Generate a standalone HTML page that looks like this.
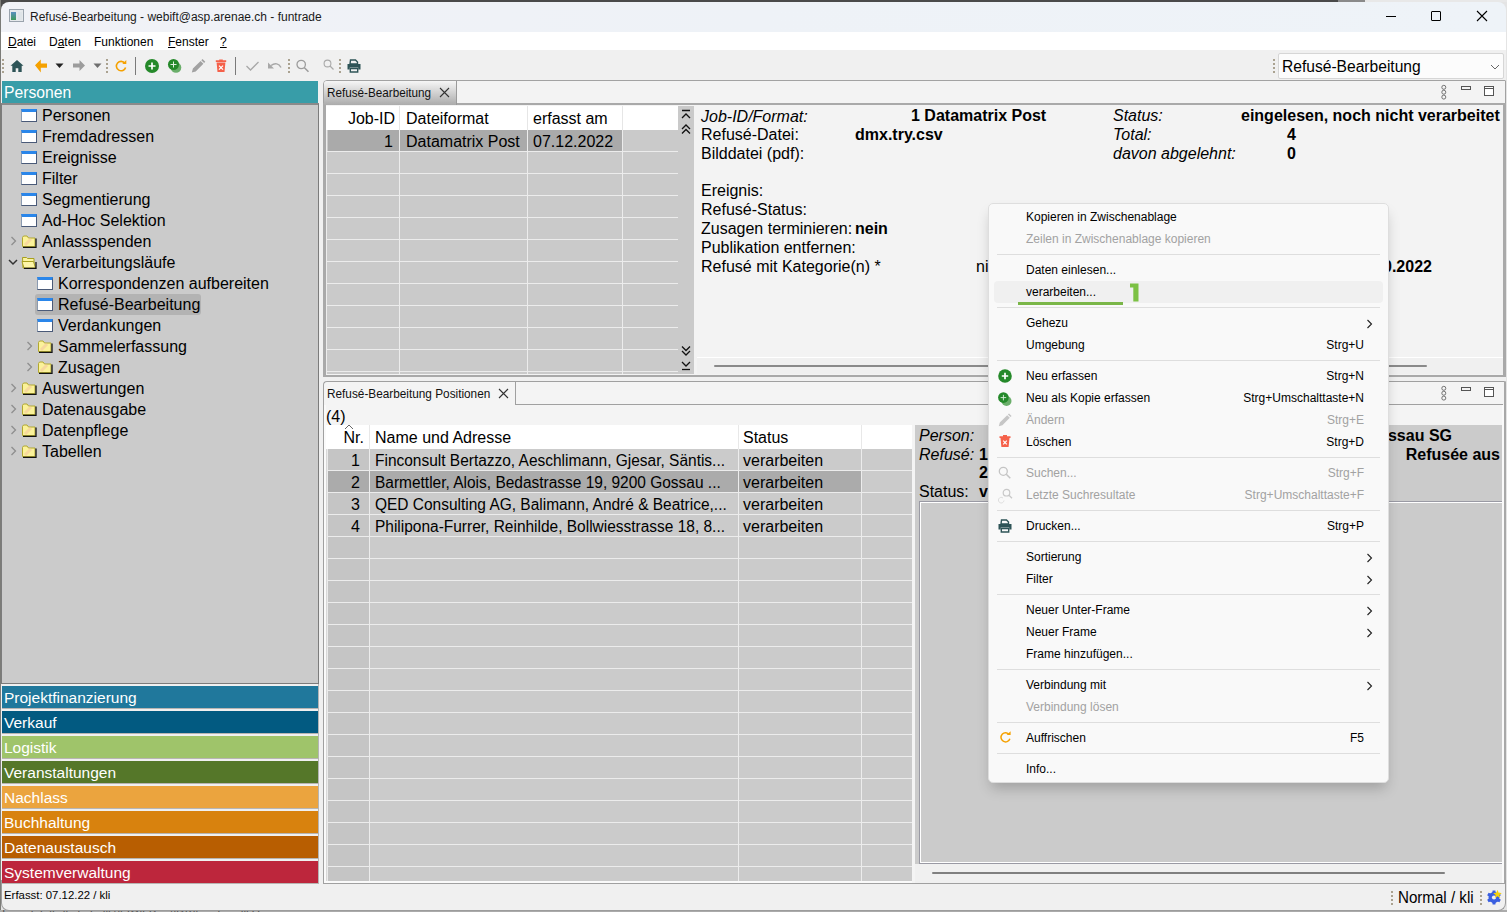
<!DOCTYPE html>
<html><head><meta charset="utf-8">
<style>
*{box-sizing:border-box;margin:0;padding:0}
html,body{width:1507px;height:912px;overflow:hidden;background:#e4e4e4;font-family:"Liberation Sans",sans-serif;color:#000}
.a{position:absolute}
#win{left:0;top:0;width:1507px;height:912px;clip-path:inset(2px 1px 2px 1px round 8px)}
.t12{font-size:12px;white-space:nowrap;line-height:14px}
.t16{font-size:16px;white-space:nowrap;line-height:18px}
.mi{position:absolute;left:1026px;font-size:12px;line-height:14px;white-space:nowrap}
.sc{position:absolute;right:144px;font-size:12px;line-height:14px;white-space:nowrap;text-align:right}
.dis{color:#a0a0a0}
.sep{position:absolute;left:997px;width:383px;height:1px;background:#e0e0e0}
</style></head><body>
<!-- screen strip -->
<div class="a" style="left:0;top:0;width:1507px;height:2px;background:#e8e8e8"></div>
<div class="a" style="left:0;top:0;width:1338px;height:2px;background:#4a4a4a"></div><div class="a" style="left:0;top:0;width:10px;height:10px;background:#4a4a4a"></div>
<div class="a" style="left:1338px;top:0;width:27px;height:2px;background:#8a8a8a"></div>
<div class="a" style="left:0;top:0;width:1px;height:912px;background:#7c7c78"></div>

<div class="a" style="left:0;top:910px;width:1507px;height:2px;background:#ababab"></div><div class="a" style="left:0;top:910px;width:300px;height:2px;overflow:hidden"><div class="a t12" style="left:2px;top:-2px;color:#555">Isvindelnlhdluilmlsdlk\lhIOlLBeutlDKllacuhnsdlliHcnmmnnmnnmnnmvhdubd/lmdlkhndImkl</div></div>
<div class="a" id="win">
<!-- title bar -->
<div class="a" style="left:0;top:0;width:1507px;height:32px;background:linear-gradient(90deg,#f1f2f7,#eef2f7 50%,#eef3f8)"></div>
<!-- menu bar -->
<div class="a" style="left:0;top:32px;width:1507px;height:18px;background:#fff"></div>
<!-- toolbar -->
<div class="a" style="left:0;top:50px;width:1507px;height:31px;background:#f0f0f0"></div>

<!-- title icon -->
<div class="a" style="left:9px;top:9px;width:15px;height:13px;border:1px solid #9aa3ad;background:#e6e9ec"></div>
<div class="a" style="left:11px;top:12px;width:5px;height:8px;background:linear-gradient(#5a8fc0,#3f9a5a)"></div>
<div class="a" style="left:18px;top:12px;width:4px;height:8px;background:#dfe4e8"></div>
<div class="a t12" style="left:30px;top:10px;color:#1a1a1a">Refusé-Bearbeitung - webift@asp.arenae.ch - funtrade</div>
<!-- window controls -->
<div class="a" style="left:1386px;top:16px;width:10px;height:1px;background:#000"></div>
<div class="a" style="left:1431px;top:11px;width:10px;height:10px;border:1px solid #000;border-radius:1px"></div>
<svg class="a" style="left:1476px;top:10px" width="12" height="12"><path d="M1 1L11 11M11 1L1 11" stroke="#000" stroke-width="1.1"/></svg>
<!-- menu -->
<div class="a t12" style="left:8px;top:35px"><u>D</u>atei</div>
<div class="a t12" style="left:49px;top:35px">D<u>a</u>ten</div>
<div class="a t12" style="left:94px;top:35px">Funktionen</div>
<div class="a t12" style="left:168px;top:35px"><u>F</u>enster</div>
<div class="a t12" style="left:220px;top:35px"><u>?</u></div>
<div class="a" style="left:2px;top:59px;width:1.6px;height:1.6px;background:#aaa290"></div><div class="a" style="left:2px;top:63px;width:1.6px;height:1.6px;background:#aaa290"></div><div class="a" style="left:2px;top:67px;width:1.6px;height:1.6px;background:#aaa290"></div><div class="a" style="left:2px;top:71px;width:1.6px;height:1.6px;background:#aaa290"></div>
<svg class="a" style="left:10px;top:59px" width="15" height="14"><path d="M7 1L0.5 6.8h1.8V13h3.4V9.2h2.6V13h3.4V6.8h1.8z" fill="#2e5457"/></svg>
<svg class="a" style="left:34px;top:59px" width="14" height="14"><path d="M1 6.3L6.8 0.6v3.9H13v4.3H6.8v4.6z" fill="#f5a100"/></svg>
<svg class="a" style="left:55px;top:63px" width="9" height="6"><path d="M0.5 0.5h8L4.5 5z" fill="#222"/></svg>
<svg class="a" style="left:72px;top:59px" width="14" height="14"><path d="M13 6.5L7.5 1v3.6H1v4h6.5V12z" fill="#9c9c9c"/></svg>
<svg class="a" style="left:93px;top:63px" width="9" height="6"><path d="M0.5 0.5h8L4.5 5z" fill="#6e6e6e"/></svg>
<div class="a" style="left:106px;top:59px;width:1.6px;height:1.6px;background:#aaa290"></div><div class="a" style="left:106px;top:63px;width:1.6px;height:1.6px;background:#aaa290"></div><div class="a" style="left:106px;top:67px;width:1.6px;height:1.6px;background:#aaa290"></div><div class="a" style="left:106px;top:71px;width:1.6px;height:1.6px;background:#aaa290"></div>
<svg class="a" style="left:114px;top:59px" width="15" height="15"><path d="M10.9 4.3A4.7 4.7 0 1 0 11.6 8.4" fill="none" stroke="#f5a100" stroke-width="1.6"/><path d="M8.3 4.9h4V1z" fill="#f5a100"/></svg>
<div class="a" style="left:135px;top:57px;width:1px;height:18px;background:#7a7a7a"></div>
<svg class="a" style="left:144px;top:58px" width="16" height="16"><circle cx="8" cy="8" r="7" fill="#25892a"/><path d="M8 4.5v7M4.5 8h7" stroke="#fff" stroke-width="1.7"/></svg>
<svg class="a" style="left:166px;top:57px" width="16" height="16"><circle cx="10" cy="10.5" r="5.3" fill="#6aae6a"/><circle cx="7.5" cy="7.5" r="5.5" fill="#25892a"/><path d="M7.5 4.5v6M4.5 7.5h6" stroke="#dff0df" stroke-width="1"/></svg>
<svg class="a" style="left:191px;top:59px" width="15" height="15"><path d="M0.8 13.4L1.9 9.6L9.6 1.9L12.4 4.7L4.7 12.4Z M10.3 1.2L11.5 0L14.3 2.8L13.1 4Z" fill="#a2a2a2"/></svg>
<svg class="a" style="left:214px;top:58px" width="14" height="16"><path d="M1.8 2.2h10.4v1.9H1.8z M5.2 1.4h3.6v1H5.2z M2.6 4.6h8.8l-0.9 9.4H3.5z" fill="#f5614a"/><path d="M5 7.6l4 4M9 7.6l-4 4" stroke="#fff" stroke-width="1.3"/></svg>
<div class="a" style="left:235px;top:57px;width:1px;height:18px;background:#7a7a7a"></div>
<svg class="a" style="left:245px;top:60px" width="15" height="12"><path d="M1.5 6l4 4 8-8" fill="none" stroke="#a8a8a8" stroke-width="1.3"/></svg>
<svg class="a" style="left:267px;top:61px" width="16" height="10"><path d="M4 4.5c4-3 8-2 10 2" fill="none" stroke="#a8a8a8" stroke-width="1.5"/><path d="M1 1.5v6h6z" fill="#a8a8a8"/></svg>
<div class="a" style="left:288px;top:59px;width:1.6px;height:1.6px;background:#aaa290"></div><div class="a" style="left:288px;top:63px;width:1.6px;height:1.6px;background:#aaa290"></div><div class="a" style="left:288px;top:67px;width:1.6px;height:1.6px;background:#aaa290"></div><div class="a" style="left:288px;top:71px;width:1.6px;height:1.6px;background:#aaa290"></div>
<svg class="a" style="left:296px;top:59px" width="14" height="14"><circle cx="5.2" cy="5.5" r="4.2" fill="none" stroke="#9c9c9c" stroke-width="1.3"/><path d="M8.2 8.5l4.3 4.3" stroke="#9c9c9c" stroke-width="1.5"/></svg>
<svg class="a" style="left:323px;top:59px" width="12" height="12"><circle cx="4.5" cy="4.5" r="3.4" fill="none" stroke="#aaa" stroke-width="1.1"/><path d="M7 7l3.5 3.5" stroke="#aaa" stroke-width="1.2"/></svg>
<div class="a" style="left:339px;top:59px;width:1.6px;height:1.6px;background:#aaa290"></div><div class="a" style="left:339px;top:63px;width:1.6px;height:1.6px;background:#aaa290"></div><div class="a" style="left:339px;top:67px;width:1.6px;height:1.6px;background:#aaa290"></div><div class="a" style="left:339px;top:71px;width:1.6px;height:1.6px;background:#aaa290"></div>
<svg class="a" style="left:347px;top:59px" width="14" height="14"><path d="M3.5 1h5l2 2v2h-7.5z" fill="none" stroke="#2e5457" stroke-width="1.4"/><path d="M0.5 5h13v5.5h-2.2V8.5H2.7v2H0.5z" fill="#2e5457"/><path d="M3.3 9.5h7.4v3.5H3.3z" fill="none" stroke="#2e5457" stroke-width="1.4"/></svg>
<div class="a" style="left:1273px;top:59px;width:1.6px;height:1.6px;background:#aaa290"></div><div class="a" style="left:1273px;top:63px;width:1.6px;height:1.6px;background:#aaa290"></div><div class="a" style="left:1273px;top:67px;width:1.6px;height:1.6px;background:#aaa290"></div><div class="a" style="left:1273px;top:71px;width:1.6px;height:1.6px;background:#aaa290"></div>
<div class="a" style="left:1278px;top:53px;width:226px;height:26px;background:#fcfcfc;border:1px solid #d6d6d6;border-radius:2px"></div>
<div class="a t16" style="left:1282px;top:58px;font-size:15.6px">Refusé-Bearbeitung</div>
<svg class="a" style="left:1490px;top:64px" width="10" height="6"><path d="M1 1l4 4 4-4" fill="none" stroke="#666" stroke-width="1"/></svg>

<div class="a" style="left:1px;top:81px;width:318px;height:804px;background:#f0f0f0"></div>
<div class="a" style="left:2px;top:81px;width:316px;height:22px;background:#389da8"></div>
<div class="a t16" style="left:4px;top:84px;color:#fff;font-size:15.7px">Personen</div>
<div class="a" style="left:1px;top:103px;width:318px;height:581px;background:#cbcbcb;border:1px solid #7c7c7c;border-top:2px solid #8a8a8a"></div>
<div class="a" style="left:21px;top:109px;width:16px;height:13px;background:#fff;border:1px solid #4a5a78;border-left-color:#8a9ab0;border-top:3px solid #2a86ea"></div>
<div class="a" style="left:42px;top:107px;font-size:16px;line-height:18px;white-space:nowrap">Personen</div>
<div class="a" style="left:21px;top:130px;width:16px;height:13px;background:#fff;border:1px solid #4a5a78;border-left-color:#8a9ab0;border-top:3px solid #2a86ea"></div>
<div class="a" style="left:42px;top:128px;font-size:16px;line-height:18px;white-space:nowrap">Fremdadressen</div>
<div class="a" style="left:21px;top:151px;width:16px;height:13px;background:#fff;border:1px solid #4a5a78;border-left-color:#8a9ab0;border-top:3px solid #2a86ea"></div>
<div class="a" style="left:42px;top:149px;font-size:16px;line-height:18px;white-space:nowrap">Ereignisse</div>
<div class="a" style="left:21px;top:172px;width:16px;height:13px;background:#fff;border:1px solid #4a5a78;border-left-color:#8a9ab0;border-top:3px solid #2a86ea"></div>
<div class="a" style="left:42px;top:170px;font-size:16px;line-height:18px;white-space:nowrap">Filter</div>
<div class="a" style="left:21px;top:193px;width:16px;height:13px;background:#fff;border:1px solid #4a5a78;border-left-color:#8a9ab0;border-top:3px solid #2a86ea"></div>
<div class="a" style="left:42px;top:191px;font-size:16px;line-height:18px;white-space:nowrap">Segmentierung</div>
<div class="a" style="left:21px;top:214px;width:16px;height:13px;background:#fff;border:1px solid #4a5a78;border-left-color:#8a9ab0;border-top:3px solid #2a86ea"></div>
<div class="a" style="left:42px;top:212px;font-size:16px;line-height:18px;white-space:nowrap">Ad-Hoc Selektion</div>
<svg class="a" style="left:21px;top:234px" width="16" height="14"><path d="M1.5 3.5v9h12.5v-8.5h-6.5l-1.5-2h-3.5z" fill="#fbf29a" stroke="#b2a830" stroke-width="1"/><path d="M4 11l6-6" stroke="#f6c8a0" stroke-width="3" opacity="0.6"/><path d="M2 13.5h13V4.5" fill="none" stroke="#111" stroke-width="1.3"/></svg>
<svg class="a" style="left:10px;top:236px" width="7" height="10"><path d="M1.5 1l4 4-4 4" fill="none" stroke="#8e8e8e" stroke-width="1.3"/></svg>
<div class="a" style="left:42px;top:233px;font-size:16px;line-height:18px;white-space:nowrap">Anlassspenden</div>
<svg class="a" style="left:21px;top:255px" width="16" height="14"><path d="M1.5 2.5h4l1 1h6.5v9.5H2z" fill="#fbf3a0" stroke="#a8a020" stroke-width="1"/><path d="M1 6.5h11.5l2 6.5H3z" fill="#fdf5a8" stroke="#a8a020" stroke-width="1"/><path d="M3 13.5h12V7" fill="none" stroke="#111" stroke-width="1.3"/></svg>
<svg class="a" style="left:8px;top:259px" width="10" height="7"><path d="M1 1l4 4 4-4" fill="none" stroke="#333" stroke-width="1.5"/></svg>
<div class="a" style="left:42px;top:254px;font-size:16px;line-height:18px;white-space:nowrap">Verarbeitungsläufe</div>
<div class="a" style="left:37px;top:277px;width:16px;height:13px;background:#fff;border:1px solid #4a5a78;border-left-color:#8a9ab0;border-top:3px solid #2a86ea"></div>
<div class="a" style="left:58px;top:275px;font-size:16px;line-height:18px;white-space:nowrap">Korrespondenzen aufbereiten</div>
<div class="a" style="left:35px;top:283px;width:166px;height:21px;background:#b3b3b3;border-radius:3px;top:294px"></div>
<div class="a" style="left:37px;top:298px;width:16px;height:13px;background:#fff;border:1px solid #4a5a78;border-left-color:#8a9ab0;border-top:3px solid #2a86ea"></div>
<div class="a" style="left:58px;top:296px;font-size:16px;line-height:18px;white-space:nowrap">Refusé-Bearbeitung</div>
<div class="a" style="left:37px;top:319px;width:16px;height:13px;background:#fff;border:1px solid #4a5a78;border-left-color:#8a9ab0;border-top:3px solid #2a86ea"></div>
<div class="a" style="left:58px;top:317px;font-size:16px;line-height:18px;white-space:nowrap">Verdankungen</div>
<svg class="a" style="left:37px;top:339px" width="16" height="14"><path d="M1.5 3.5v9h12.5v-8.5h-6.5l-1.5-2h-3.5z" fill="#fbf29a" stroke="#b2a830" stroke-width="1"/><path d="M4 11l6-6" stroke="#f6c8a0" stroke-width="3" opacity="0.6"/><path d="M2 13.5h13V4.5" fill="none" stroke="#111" stroke-width="1.3"/></svg>
<svg class="a" style="left:26px;top:341px" width="7" height="10"><path d="M1.5 1l4 4-4 4" fill="none" stroke="#8e8e8e" stroke-width="1.3"/></svg>
<div class="a" style="left:58px;top:338px;font-size:16px;line-height:18px;white-space:nowrap">Sammelerfassung</div>
<svg class="a" style="left:37px;top:360px" width="16" height="14"><path d="M1.5 3.5v9h12.5v-8.5h-6.5l-1.5-2h-3.5z" fill="#fbf29a" stroke="#b2a830" stroke-width="1"/><path d="M4 11l6-6" stroke="#f6c8a0" stroke-width="3" opacity="0.6"/><path d="M2 13.5h13V4.5" fill="none" stroke="#111" stroke-width="1.3"/></svg>
<svg class="a" style="left:26px;top:362px" width="7" height="10"><path d="M1.5 1l4 4-4 4" fill="none" stroke="#8e8e8e" stroke-width="1.3"/></svg>
<div class="a" style="left:58px;top:359px;font-size:16px;line-height:18px;white-space:nowrap">Zusagen</div>
<svg class="a" style="left:21px;top:381px" width="16" height="14"><path d="M1.5 3.5v9h12.5v-8.5h-6.5l-1.5-2h-3.5z" fill="#fbf29a" stroke="#b2a830" stroke-width="1"/><path d="M4 11l6-6" stroke="#f6c8a0" stroke-width="3" opacity="0.6"/><path d="M2 13.5h13V4.5" fill="none" stroke="#111" stroke-width="1.3"/></svg>
<svg class="a" style="left:10px;top:383px" width="7" height="10"><path d="M1.5 1l4 4-4 4" fill="none" stroke="#8e8e8e" stroke-width="1.3"/></svg>
<div class="a" style="left:42px;top:380px;font-size:16px;line-height:18px;white-space:nowrap">Auswertungen</div>
<svg class="a" style="left:21px;top:402px" width="16" height="14"><path d="M1.5 3.5v9h12.5v-8.5h-6.5l-1.5-2h-3.5z" fill="#fbf29a" stroke="#b2a830" stroke-width="1"/><path d="M4 11l6-6" stroke="#f6c8a0" stroke-width="3" opacity="0.6"/><path d="M2 13.5h13V4.5" fill="none" stroke="#111" stroke-width="1.3"/></svg>
<svg class="a" style="left:10px;top:404px" width="7" height="10"><path d="M1.5 1l4 4-4 4" fill="none" stroke="#8e8e8e" stroke-width="1.3"/></svg>
<div class="a" style="left:42px;top:401px;font-size:16px;line-height:18px;white-space:nowrap">Datenausgabe</div>
<svg class="a" style="left:21px;top:423px" width="16" height="14"><path d="M1.5 3.5v9h12.5v-8.5h-6.5l-1.5-2h-3.5z" fill="#fbf29a" stroke="#b2a830" stroke-width="1"/><path d="M4 11l6-6" stroke="#f6c8a0" stroke-width="3" opacity="0.6"/><path d="M2 13.5h13V4.5" fill="none" stroke="#111" stroke-width="1.3"/></svg>
<svg class="a" style="left:10px;top:425px" width="7" height="10"><path d="M1.5 1l4 4-4 4" fill="none" stroke="#8e8e8e" stroke-width="1.3"/></svg>
<div class="a" style="left:42px;top:422px;font-size:16px;line-height:18px;white-space:nowrap">Datenpflege</div>
<svg class="a" style="left:21px;top:444px" width="16" height="14"><path d="M1.5 3.5v9h12.5v-8.5h-6.5l-1.5-2h-3.5z" fill="#fbf29a" stroke="#b2a830" stroke-width="1"/><path d="M4 11l6-6" stroke="#f6c8a0" stroke-width="3" opacity="0.6"/><path d="M2 13.5h13V4.5" fill="none" stroke="#111" stroke-width="1.3"/></svg>
<svg class="a" style="left:10px;top:446px" width="7" height="10"><path d="M1.5 1l4 4-4 4" fill="none" stroke="#8e8e8e" stroke-width="1.3"/></svg>
<div class="a" style="left:42px;top:443px;font-size:16px;line-height:18px;white-space:nowrap">Tabellen</div>
<div class="a" style="left:2px;top:686px;width:316px;height:22px;background:#20789c;"></div><div class="a" style="left:2px;top:708px;width:317px;height:1px;background:#b8b5b2"></div>
<div class="a t16" style="left:4px;top:689px;color:#fff;font-size:15.5px">Projektfinanzierung</div>
<div class="a" style="left:2px;top:711px;width:316px;height:22px;background:#025a81;"></div><div class="a" style="left:2px;top:733px;width:317px;height:1px;background:#b8b5b2"></div>
<div class="a t16" style="left:4px;top:714px;color:#fff;font-size:15.5px">Verkauf</div>
<div class="a" style="left:2px;top:736px;width:316px;height:22px;background:#9fc46a;"></div><div class="a" style="left:2px;top:758px;width:317px;height:1px;background:#b8b5b2"></div>
<div class="a t16" style="left:4px;top:739px;color:#fff;font-size:15.5px">Logistik</div>
<div class="a" style="left:2px;top:761px;width:316px;height:22px;background:#557729;"></div><div class="a" style="left:2px;top:783px;width:317px;height:1px;background:#b8b5b2"></div>
<div class="a t16" style="left:4px;top:764px;color:#fff;font-size:15.5px">Veranstaltungen</div>
<div class="a" style="left:2px;top:786px;width:316px;height:22px;background:#eba43e;"></div><div class="a" style="left:2px;top:808px;width:317px;height:1px;background:#b8b5b2"></div>
<div class="a t16" style="left:4px;top:789px;color:#fff;font-size:15.5px">Nachlass</div>
<div class="a" style="left:2px;top:811px;width:316px;height:22px;background:#d8820e;"></div><div class="a" style="left:2px;top:833px;width:317px;height:1px;background:#b8b5b2"></div>
<div class="a t16" style="left:4px;top:814px;color:#fff;font-size:15.5px">Buchhaltung</div>
<div class="a" style="left:2px;top:836px;width:316px;height:22px;background:#b85e01;"></div><div class="a" style="left:2px;top:858px;width:317px;height:1px;background:#b8b5b2"></div>
<div class="a t16" style="left:4px;top:839px;color:#fff;font-size:15.5px">Datenaustausch</div>
<div class="a" style="left:2px;top:861px;width:316px;height:22px;background:#bd263c;"></div><div class="a" style="left:2px;top:883px;width:317px;height:1px;background:#b8b5b2"></div>
<div class="a t16" style="left:4px;top:864px;color:#fff;font-size:15.5px">Systemverwaltung</div>
<div class="a" style="left:318px;top:684px;width:1px;height:200px;background:#b4b4b4"></div>
<div class="a" style="left:319px;top:81px;width:1188px;height:804px;background:#f0f0f0"></div>
<div class="a" style="left:323px;top:80px;width:1183px;height:297px;background:#f3f3f3;border:1px solid #a2a2a2;border-radius:4px 1px 0 0"></div>
<div class="a" style="left:323px;top:103px;width:1183px;height:274px;border:2px solid #a9a9a9;border-left-width:3px;border-right-width:3px"></div>
<div class="a" style="left:324px;top:81px;width:133px;height:24px;background:linear-gradient(#f6f6f6,#ababab);border-right:1px solid #9a9a9a;border-radius:3px 0 0 0"></div>
<div class="a t12" style="left:327px;top:86px;color:#111;font-size:12.2px;transform:scaleX(0.96);transform-origin:0 0">Refusé-Bearbeitung</div>
<svg class="a" style="left:439px;top:87px" width="11" height="11"><path d="M1 1l9 9M10 1l-9 9" stroke="#333" stroke-width="1.1"/></svg>
<svg class="a" style="left:1440px;top:84px" width="8" height="16"><circle cx="3.8" cy="3.3" r="2" fill="none" stroke="#555" stroke-width="0.8"/><circle cx="3.8" cy="8.2" r="2" fill="none" stroke="#555" stroke-width="0.8"/><circle cx="3.8" cy="13.1" r="2" fill="none" stroke="#555" stroke-width="0.8"/></svg><div class="a" style="left:1461px;top:86px;width:10px;height:4px;border:1px solid #555"></div><div class="a" style="left:1484px;top:86px;width:10px;height:10px;border:1px solid #555;background:#fff"></div><div class="a" style="left:1484px;top:88px;width:10px;height:1px;background:#555"></div>
<div class="a" style="left:326px;top:106px;width:352px;height:24px;background:#fff"></div>
<div class="a" style="left:399px;top:106px;width:1px;height:24px;background:#e6e6e6"></div>
<div class="a" style="left:527px;top:106px;width:1px;height:24px;background:#e6e6e6"></div>
<div class="a" style="left:622px;top:106px;width:1px;height:24px;background:#e6e6e6"></div>
<div class="a" style="left:326px;top:130px;width:352px;height:244px;background:#cacaca"></div>
<div class="a" style="left:328px;top:130px;width:294px;height:21px;background:#aaaaaa"></div>
<div class="a" style="left:326px;top:151px;width:352px;height:1px;background:#ececec"></div>
<div class="a" style="left:326px;top:173px;width:352px;height:1px;background:#ececec"></div>
<div class="a" style="left:326px;top:195px;width:352px;height:1px;background:#ececec"></div>
<div class="a" style="left:326px;top:217px;width:352px;height:1px;background:#ececec"></div>
<div class="a" style="left:326px;top:239px;width:352px;height:1px;background:#ececec"></div>
<div class="a" style="left:326px;top:261px;width:352px;height:1px;background:#ececec"></div>
<div class="a" style="left:326px;top:283px;width:352px;height:1px;background:#ececec"></div>
<div class="a" style="left:326px;top:305px;width:352px;height:1px;background:#ececec"></div>
<div class="a" style="left:326px;top:327px;width:352px;height:1px;background:#ececec"></div>
<div class="a" style="left:326px;top:349px;width:352px;height:1px;background:#ececec"></div>
<div class="a" style="left:326px;top:371px;width:352px;height:1px;background:#ececec"></div>
<div class="a" style="left:326px;top:130px;width:1px;height:244px;background:#ececec"></div>
<div class="a" style="left:399px;top:130px;width:1px;height:244px;background:#ececec"></div>
<div class="a" style="left:527px;top:130px;width:1px;height:244px;background:#ececec"></div>
<div class="a" style="left:622px;top:130px;width:1px;height:244px;background:#ececec"></div>
<div class="a t16" style="left:326px;top:110px;width:69px;text-align:right">Job-ID</div>
<div class="a t16" style="left:406px;top:110px">Dateiformat</div>
<div class="a t16" style="left:533px;top:110px">erfasst am</div>
<div class="a t16" style="left:326px;top:133px;width:67px;text-align:right">1</div>
<div class="a t16" style="left:406px;top:133px">Datamatrix Post</div>
<div class="a t16" style="left:533px;top:133px">07.12.2022</div>
<div class="a" style="left:678px;top:106px;width:16px;height:268px;background:#cacaca"></div>
<svg class="a" style="left:681px;top:109px" width="10" height="26"><path d="M1 1.5h8" stroke="#111" stroke-width="1.3"/><path d="M1 9l4-4 4 4" fill="none" stroke="#111" stroke-width="1.3"/><path d="M1 20l4-4 4 4M1 24.5l4-4 4 4" fill="none" stroke="#111" stroke-width="1.3"/></svg>
<svg class="a" style="left:681px;top:345px" width="10" height="26"><path d="M1 1.5l4 4 4-4M1 6l4 4 4-4" fill="none" stroke="#111" stroke-width="1.3"/><path d="M1 17l4 4 4-4" fill="none" stroke="#111" stroke-width="1.3"/><path d="M1 24.5h8" stroke="#111" stroke-width="1.3"/></svg>
<div class="a" style="left:697px;top:357px;width:806px;height:1px;background:#fff"></div>
<div class="a" style="left:697px;top:358px;width:806px;height:16px;background:#f0f0f0"></div>
<div class="a" style="left:714px;top:365px;width:713px;height:2px;background:#8a8a8a;border-radius:1px"></div>
<div class="a t16" style="left:701px;top:108px"><i>Job-ID/Format:</i></div>
<div class="a t16" style="left:701px;top:126px">Refusé-Datei:</div>
<div class="a t16" style="left:701px;top:145px">Bilddatei (pdf):</div>
<div class="a t16" style="left:701px;top:182px">Ereignis:</div>
<div class="a t16" style="left:701px;top:201px">Refusé-Status:</div>
<div class="a t16" style="left:701px;top:220px">Zusagen terminieren:</div>
<div class="a t16" style="left:701px;top:239px">Publikation entfernen:</div>
<div class="a t16" style="left:701px;top:258px">Refusé mit Kategorie(n) *</div>
<div class="a t16" style="left:855px;top:126px"><b>dmx.try.csv</b></div>
<div class="a t16" style="left:855px;top:220px"><b>nein</b></div>
<div class="a t16" style="left:911px;top:107px"><b>1 Datamatrix Post</b></div>
<div class="a t16" style="left:976px;top:258px">ni</div>
<div class="a t16" style="left:1113px;top:107px"><i>Status:</i></div>
<div class="a t16" style="left:1113px;top:126px"><i>Total:</i></div>
<div class="a t16" style="left:1113px;top:145px"><i>davon abgelehnt:</i></div>
<div class="a t16" style="left:1241px;top:107px"><b>eingelesen, noch nicht verarbeitet</b></div>
<div class="a t16" style="left:1287px;top:126px"><b>4</b></div>
<div class="a t16" style="left:1287px;top:145px"><b>0</b></div>
<div class="a t16" style="left:1383px;top:258px"><b>0.2022</b></div>
<div class="a" style="left:323px;top:381px;width:1183px;height:503px;background:#f4f4f4;border:1px solid #a0a0a0;border-right:2px solid #a8a8a8;border-radius:4px 1px 0 0"></div>
<div class="a" style="left:515px;top:404px;width:988px;height:1px;background:#a0a0a0"></div>
<div class="a" style="left:515px;top:382px;width:1px;height:23px;background:#a0a0a0"></div>
<div class="a t12" style="left:327px;top:387px;color:#111;font-size:12.2px;transform:scaleX(0.968);transform-origin:0 0">Refusé-Bearbeitung Positionen</div>
<svg class="a" style="left:498px;top:388px" width="11" height="11"><path d="M1 1l9 9M10 1l-9 9" stroke="#333" stroke-width="1.1"/></svg>
<svg class="a" style="left:1440px;top:385px" width="8" height="16"><circle cx="3.8" cy="3.3" r="2" fill="none" stroke="#555" stroke-width="0.8"/><circle cx="3.8" cy="8.2" r="2" fill="none" stroke="#555" stroke-width="0.8"/><circle cx="3.8" cy="13.1" r="2" fill="none" stroke="#555" stroke-width="0.8"/></svg>
<div class="a" style="left:1461px;top:387px;width:10px;height:4px;border:1px solid #555"></div>
<div class="a" style="left:1484px;top:387px;width:10px;height:10px;border:1px solid #555;background:#fff"></div><div class="a" style="left:1484px;top:389px;width:10px;height:1px;background:#555"></div>
<div class="a t16" style="left:326px;top:408px">(4)</div>
<div class="a" style="left:326px;top:425px;width:586px;height:24px;background:#fff"></div>
<div class="a" style="left:369px;top:425px;width:1px;height:24px;background:#e8e8e8"></div>
<div class="a" style="left:738px;top:425px;width:1px;height:24px;background:#e8e8e8"></div>
<div class="a" style="left:861px;top:425px;width:1px;height:24px;background:#e8e8e8"></div>
<div class="a" style="left:326px;top:449px;width:586px;height:432px;background:#cbcbcb"></div>
<div class="a" style="left:328px;top:449px;width:41px;height:432px;background:#c5c5c5"></div>
<div class="a" style="left:328px;top:471px;width:533px;height:21px;background:#ababab"></div>
<div class="a" style="left:326px;top:470px;width:586px;height:1px;background:#ececec"></div>
<div class="a" style="left:326px;top:492px;width:586px;height:1px;background:#ececec"></div>
<div class="a" style="left:326px;top:514px;width:586px;height:1px;background:#ececec"></div>
<div class="a" style="left:326px;top:536px;width:586px;height:1px;background:#ececec"></div>
<div class="a" style="left:326px;top:558px;width:586px;height:1px;background:#ececec"></div>
<div class="a" style="left:326px;top:580px;width:586px;height:1px;background:#ececec"></div>
<div class="a" style="left:326px;top:602px;width:586px;height:1px;background:#ececec"></div>
<div class="a" style="left:326px;top:624px;width:586px;height:1px;background:#ececec"></div>
<div class="a" style="left:326px;top:646px;width:586px;height:1px;background:#ececec"></div>
<div class="a" style="left:326px;top:668px;width:586px;height:1px;background:#ececec"></div>
<div class="a" style="left:326px;top:690px;width:586px;height:1px;background:#ececec"></div>
<div class="a" style="left:326px;top:712px;width:586px;height:1px;background:#ececec"></div>
<div class="a" style="left:326px;top:734px;width:586px;height:1px;background:#ececec"></div>
<div class="a" style="left:326px;top:756px;width:586px;height:1px;background:#ececec"></div>
<div class="a" style="left:326px;top:778px;width:586px;height:1px;background:#ececec"></div>
<div class="a" style="left:326px;top:800px;width:586px;height:1px;background:#ececec"></div>
<div class="a" style="left:326px;top:822px;width:586px;height:1px;background:#ececec"></div>
<div class="a" style="left:326px;top:844px;width:586px;height:1px;background:#ececec"></div>
<div class="a" style="left:326px;top:866px;width:586px;height:1px;background:#ececec"></div>
<div class="a" style="left:327px;top:449px;width:1px;height:432px;background:#ececec"></div><div class="a" style="left:326px;top:449px;width:1px;height:432px;background:#d8d8d8"></div>
<div class="a" style="left:369px;top:449px;width:1px;height:432px;background:#ececec"></div>
<div class="a" style="left:738px;top:449px;width:1px;height:432px;background:#ececec"></div>
<div class="a" style="left:861px;top:449px;width:1px;height:432px;background:#ececec"></div>
<div class="a" style="left:326px;top:881px;width:586px;height:2px;background:#fafafa"></div>
<div class="a" style="left:324px;top:405px;width:2px;height:478px;background:#fafafa"></div>
<svg class="a" style="left:344px;top:424px" width="10" height="6"><path d="M1 5l4-4 4 4" fill="none" stroke="#555" stroke-width="0.9"/></svg>
<div class="a t16" style="left:326px;top:429px;width:38px;text-align:right">Nr.</div>
<div class="a t16" style="left:375px;top:429px">Name und Adresse</div>
<div class="a t16" style="left:743px;top:429px">Status</div>
<div class="a t16" style="left:326px;top:452px;width:34px;text-align:right">1</div>
<div class="a t16" style="left:375px;top:452px;transform:scaleX(0.967);transform-origin:0 0">Finconsult Bertazzo, Aeschlimann, Gjesar, Säntis...</div>
<div class="a t16" style="left:743px;top:452px">verarbeiten</div>
<div class="a t16" style="left:326px;top:474px;width:34px;text-align:right">2</div>
<div class="a t16" style="left:375px;top:474px;transform:scaleX(0.967);transform-origin:0 0">Barmettler, Alois, Bedastrasse 19, 9200 Gossau ...</div>
<div class="a t16" style="left:743px;top:474px">verarbeiten</div>
<div class="a t16" style="left:326px;top:496px;width:34px;text-align:right">3</div>
<div class="a t16" style="left:375px;top:496px;transform:scaleX(0.967);transform-origin:0 0">QED Consulting AG, Balimann, André &amp; Beatrice,...</div>
<div class="a t16" style="left:743px;top:496px">verarbeiten</div>
<div class="a t16" style="left:326px;top:518px;width:34px;text-align:right">4</div>
<div class="a t16" style="left:375px;top:518px;transform:scaleX(0.967);transform-origin:0 0">Philipona-Furrer, Reinhilde, Bollwiesstrasse 18, 8...</div>
<div class="a t16" style="left:743px;top:518px">verarbeiten</div>
<div class="a" style="left:915px;top:425px;width:587px;height:439px;background:#cbcbcb"></div><div class="a" style="left:1502px;top:405px;width:2px;height:478px;background:#fafafa"></div>
<div class="a" style="left:919px;top:501px;width:583px;height:363px;border-left:1px solid #9a9aa4;border-top:1px solid #9a9aa4;border-bottom:1px solid #9a9aa4"></div>
<div class="a" style="left:920px;top:502px;width:582px;height:361px;border-left:1px solid #fff;border-top:1px solid #fff;border-bottom:1px solid #fff"></div>
<div class="a t16" style="left:919px;top:427px"><i>Person:</i></div>
<div class="a t16" style="left:919px;top:446px"><i>Refusé:</i></div>
<div class="a t16" style="left:919px;top:483px">Status:</div>
<div class="a t16" style="left:979px;top:446px"><b>1</b></div>
<div class="a t16" style="left:979px;top:464px"><b>2</b></div>
<div class="a t16" style="left:979px;top:483px"><b>v</b></div>
<div class="a t16" style="left:1300px;top:427px;width:152px;text-align:right"><b>Gossau SG</b></div>
<div class="a t16" style="left:1300px;top:446px;width:200px;text-align:right"><b>Refusée aus</b></div>
<div class="a" style="left:915px;top:864px;width:587px;height:19px;background:#f0f0f0"></div>
<div class="a" style="left:932px;top:872px;width:513px;height:2px;background:#808080;border-radius:1px"></div>
<div class="a" style="left:1px;top:884px;width:1505px;height:27px;background:#f0f0f0"></div>
<div class="a t12" style="left:4px;top:888px;font-size:11.4px">Erfasst: 07.12.22 / kli</div>
<div class="a" style="left:1391px;top:891px;width:1.6px;height:1.6px;background:#aaa290"></div><div class="a" style="left:1391px;top:895px;width:1.6px;height:1.6px;background:#aaa290"></div><div class="a" style="left:1391px;top:899px;width:1.6px;height:1.6px;background:#aaa290"></div><div class="a" style="left:1391px;top:903px;width:1.6px;height:1.6px;background:#aaa290"></div>
<div class="a t16" style="left:1398px;top:889px;transform:scaleX(0.945);transform-origin:0 0">Normal / kli</div>
<div class="a" style="left:1480px;top:891px;width:1.6px;height:1.6px;background:#aaa290"></div><div class="a" style="left:1480px;top:895px;width:1.6px;height:1.6px;background:#aaa290"></div><div class="a" style="left:1480px;top:899px;width:1.6px;height:1.6px;background:#aaa290"></div><div class="a" style="left:1480px;top:903px;width:1.6px;height:1.6px;background:#aaa290"></div>
<svg class="a" style="left:1486px;top:889px" width="17" height="17"><path d="M13.10 9.51 L14.82 10.81 L13.41 13.25 L11.43 12.41 L9.67 13.42 L9.40 15.56 L6.60 15.56 L6.33 13.42 L4.57 12.41 L2.59 13.25 L1.18 10.81 L2.90 9.51 L2.90 7.49 L1.18 6.19 L2.59 3.75 L4.57 4.59 L6.33 3.58 L6.60 1.44 L9.40 1.44 L9.67 3.58 L11.43 4.59 L13.41 3.75 L14.82 6.19 L13.10 7.49Z" fill="#3a5fe0"/><circle cx="8" cy="8.5" r="5.4" fill="#3a5fe0"/><circle cx="8" cy="8.5" r="2.1" fill="#f0f0f0"/><path d="M11.50 0.70 L12.68 3.68 L15.87 3.88 L13.40 5.92 L14.20 9.02 L11.50 7.30 L8.80 9.02 L9.60 5.92 L7.13 3.88 L10.32 3.68Z" fill="#f7d20a"/></svg>
<div class="a" style="left:988px;top:203px;width:401px;height:580px;background:#f9f9f9;border:1px solid #dedede;border-radius:5px;box-shadow:0 8px 14px -3px rgba(0,0,0,0.22)"></div>
<div class="a" style="left:994px;top:281px;width:389px;height:22px;background:#f0f0f0;border-radius:4px"></div>
<div class="a" style="left:1018px;top:302px;width:105px;height:3px;background:#7ab648"></div>
<svg class="a" style="left:1129px;top:283px" width="11" height="19"><path d="M1 0.5h8.5v18H4.3V4.5H1z" fill="#7cc144"/></svg>
<div class="a t12" style="left:1026px;top:210px;color:#000">Kopieren in Zwischenablage</div>
<div class="a t12" style="left:1026px;top:232px;color:#a2a2a2">Zeilen in Zwischenablage kopieren</div>
<div class="a" style="left:997px;top:254px;width:383px;height:1px;background:#dedede"></div>
<div class="a t12" style="left:1026px;top:263px;color:#000">Daten einlesen...</div>
<div class="a t12" style="left:1026px;top:285px;color:#000">verarbeiten...</div>
<div class="a" style="left:997px;top:307px;width:383px;height:1px;background:#dedede"></div>
<div class="a t12" style="left:1026px;top:316px;color:#000">Gehezu</div>
<svg class="a" style="left:1366px;top:319px" width="8" height="10"><path d="M1.5 1l4 4-4 4" fill="none" stroke="#222" stroke-width="1.1"/></svg>
<div class="a t12" style="left:1026px;top:338px;color:#000">Umgebung</div>
<div class="a t12" style="left:1164px;width:200px;text-align:right;top:338px;color:#000">Strg+U</div>
<div class="a" style="left:997px;top:360px;width:383px;height:1px;background:#dedede"></div>
<div class="a t12" style="left:1026px;top:369px;color:#000">Neu erfassen</div>
<div class="a t12" style="left:1164px;width:200px;text-align:right;top:369px;color:#000">Strg+N</div>
<svg class="a" style="left:998px;top:369px" width="14" height="14"><circle cx="7" cy="7" r="6.8" fill="#25892a"/><path d="M7 3.8v6.4M3.8 7h6.4" stroke="#fff" stroke-width="1.7"/></svg>
<div class="a t12" style="left:1026px;top:391px;color:#000">Neu als Kopie erfassen</div>
<div class="a t12" style="left:1164px;width:200px;text-align:right;top:391px;color:#000">Strg+Umschalttaste+N</div>
<svg class="a" style="left:997px;top:391px" width="16" height="16"><circle cx="9.5" cy="10" r="5" fill="#6aae6a"/><circle cx="6.4" cy="6.6" r="5.3" fill="#25892a"/><path d="M6.4 3.8v5.6M3.6 6.6h5.6" stroke="#dff0df" stroke-width="0.9"/></svg>
<div class="a t12" style="left:1026px;top:413px;color:#a2a2a2">Ändern</div>
<div class="a t12" style="left:1164px;width:200px;text-align:right;top:413px;color:#a2a2a2">Strg+E</div>
<svg class="a" style="left:998px;top:413px" width="14" height="14"><path d="M0.8 13.2L1.8 9.6L9.2 2.2L11.8 4.8L4.4 12.2Z M9.9 1.5L11 0.4L13.6 3L12.5 4.1Z" fill="#c6c6c6"/></svg>
<div class="a t12" style="left:1026px;top:435px;color:#000">Löschen</div>
<div class="a t12" style="left:1164px;width:200px;text-align:right;top:435px;color:#000">Strg+D</div>
<svg class="a" style="left:999px;top:435px" width="12" height="14"><path d="M0.5 1.3h11v1.7H0.5z M4 0h4v1.3H4z M1.5 3h9l-0.9 9H2.4z" fill="#f5614a"/><path d="M4.2 5.7l3.6 3.6M7.8 5.7l-3.6 3.6" stroke="#fff" stroke-width="1.2"/></svg>
<div class="a" style="left:997px;top:457px;width:383px;height:1px;background:#dedede"></div>
<div class="a t12" style="left:1026px;top:466px;color:#a2a2a2">Suchen...</div>
<div class="a t12" style="left:1164px;width:200px;text-align:right;top:466px;color:#a2a2a2">Strg+F</div>
<svg class="a" style="left:998px;top:466px" width="14" height="14"><circle cx="5.3" cy="5.3" r="4" fill="none" stroke="#c4c4c4" stroke-width="1.3"/><path d="M8.3 8.3l4 4" stroke="#c4c4c4" stroke-width="1.5"/></svg>
<div class="a t12" style="left:1026px;top:488px;color:#a2a2a2">Letzte Suchresultate</div>
<div class="a t12" style="left:1164px;width:200px;text-align:right;top:488px;color:#a2a2a2">Strg+Umschalttaste+F</div>
<svg class="a" style="left:998px;top:488px" width="16" height="16"><circle cx="8.5" cy="4.7" r="3.3" fill="none" stroke="#c8c8c8" stroke-width="1.2"/><path d="M11 7.2l3 3" stroke="#c8c8c8" stroke-width="1.3"/><path d="M6 12.5a2.8 2.8 0 1 1-1-2.5" fill="none" stroke="#dedede" stroke-width="1"/></svg>
<div class="a" style="left:997px;top:510px;width:383px;height:1px;background:#dedede"></div>
<div class="a t12" style="left:1026px;top:519px;color:#000">Drucken...</div>
<div class="a t12" style="left:1164px;width:200px;text-align:right;top:519px;color:#000">Strg+P</div>
<svg class="a" style="left:998px;top:519px" width="14" height="14"><path d="M3.5 1h5l2 2v2h-7.5z" fill="none" stroke="#2e5457" stroke-width="1.4"/><path d="M0.5 5h13v5.5h-2.2V8.5H2.7v2H0.5z" fill="#2e5457"/><path d="M3.3 9.5h7.4v3.5H3.3z" fill="none" stroke="#2e5457" stroke-width="1.4"/></svg>
<div class="a" style="left:997px;top:541px;width:383px;height:1px;background:#dedede"></div>
<div class="a t12" style="left:1026px;top:550px;color:#000">Sortierung</div>
<svg class="a" style="left:1366px;top:553px" width="8" height="10"><path d="M1.5 1l4 4-4 4" fill="none" stroke="#222" stroke-width="1.1"/></svg>
<div class="a t12" style="left:1026px;top:572px;color:#000">Filter</div>
<svg class="a" style="left:1366px;top:575px" width="8" height="10"><path d="M1.5 1l4 4-4 4" fill="none" stroke="#222" stroke-width="1.1"/></svg>
<div class="a" style="left:997px;top:594px;width:383px;height:1px;background:#dedede"></div>
<div class="a t12" style="left:1026px;top:603px;color:#000">Neuer Unter-Frame</div>
<svg class="a" style="left:1366px;top:606px" width="8" height="10"><path d="M1.5 1l4 4-4 4" fill="none" stroke="#222" stroke-width="1.1"/></svg>
<div class="a t12" style="left:1026px;top:625px;color:#000">Neuer Frame</div>
<svg class="a" style="left:1366px;top:628px" width="8" height="10"><path d="M1.5 1l4 4-4 4" fill="none" stroke="#222" stroke-width="1.1"/></svg>
<div class="a t12" style="left:1026px;top:647px;color:#000">Frame hinzufügen...</div>
<div class="a" style="left:997px;top:669px;width:383px;height:1px;background:#dedede"></div>
<div class="a t12" style="left:1026px;top:678px;color:#000">Verbindung mit</div>
<svg class="a" style="left:1366px;top:681px" width="8" height="10"><path d="M1.5 1l4 4-4 4" fill="none" stroke="#222" stroke-width="1.1"/></svg>
<div class="a t12" style="left:1026px;top:700px;color:#a2a2a2">Verbindung lösen</div>
<div class="a" style="left:997px;top:722px;width:383px;height:1px;background:#dedede"></div>
<div class="a t12" style="left:1026px;top:731px;color:#000">Auffrischen</div>
<div class="a t12" style="left:1164px;width:200px;text-align:right;top:731px;color:#000">F5</div>
<svg class="a" style="left:999px;top:731px" width="13" height="13"><path d="M10.3 3.6A4.6 4.6 0 1 0 10.9 7.8" fill="none" stroke="#f5a100" stroke-width="1.5"/><path d="M7.6 4h4V0.2z" fill="#f5a100"/></svg>
<div class="a" style="left:997px;top:753px;width:383px;height:1px;background:#dedede"></div>
<div class="a t12" style="left:1026px;top:762px;color:#000">Info...</div>
</div>
<div class="a" style="left:1px;top:880px;width:1505px;height:31px;border:1px solid #9c9c9c;border-top:none;border-radius:0 0 8px 8px"></div>
<div class="a" style="left:0;top:895px;width:12px;height:17px;background:#ababab;z-index:-1"></div>
</body></html>
